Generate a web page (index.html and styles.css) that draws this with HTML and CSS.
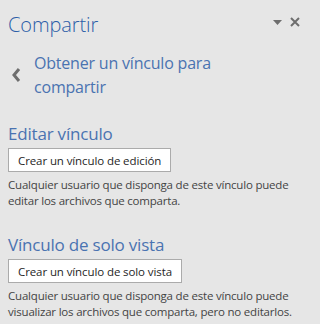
FILE: index.html
```html
<!DOCTYPE html>
<html lang="es">
<head>
<meta charset="utf-8">
<link rel="stylesheet" href="styles.css">
</head>
<body>
<div class="pane">
  <div class="header">
    <h1 class="title">Compartir</h1>
    <div class="tools">
      <svg class="ico-drop" width="9" height="5" viewBox="0 0 9 5"><path d="M0 0H9L4.5 5Z" fill="#6e6e6e"/></svg>
      <svg class="ico-close" width="10" height="10" viewBox="0 0 10 10"><path d="M1 1L9 9M9 1L1 9" stroke="#6e6e6e" stroke-width="2"/></svg>
    </div>
  </div>
  <div class="back">
    <svg class="ico-back" width="10" height="16" viewBox="0 0 10 16"><path d="M8 2L3 8L8 14" fill="none" stroke="#6e6e6e" stroke-width="3"/></svg>
    <div class="back-text">Obtener un vínculo para compartir</div>
  </div>
  <section class="sec">
    <h2 class="sec-title">Editar vínculo</h2>
    <button class="btn">Crear un vínculo de edición</button>
    <p class="desc">Cualquier usuario que disponga de este vínculo puede editar los archivos que comparta.</p>
  </section>
  <section class="sec sec2">
    <h2 class="sec-title">Vínculo de solo vista</h2>
    <button class="btn">Crear un vínculo de solo vista</button>
    <p class="desc">Cualquier usuario que disponga de este vínculo puede visualizar los archivos que comparta, pero no editarlos.</p>
  </section>
</div>
</body>
</html>
```
FILE: styles.css
```css
html, body {
  margin: 0;
  padding: 0;
  background: #e6e6e6;
}
body {
  font-family: "Open Sans", "Noto Sans", sans-serif;
  width: 309px;
  height: 324px;
  overflow: hidden;
}
.pane {
  padding: 0 8px;
}
.header {
  display: flex;
  justify-content: space-between;
  align-items: flex-start;
  padding-top: 11px;
}
.title {
  margin: 0;
  font-weight: 300;
  font-size: 20px;
  line-height: 28px;
  color: #2c5ea8;
  letter-spacing: -0.1px;
}
.tools {
  display: flex;
  align-items: center;
  gap: 8px;
  padding-top: 6px;
  padding-right: 1px;
}
.ico-drop { display: block; }
.ico-close { display: block; }
.back {
  display: flex;
  align-items: center;
  margin-top: 12px;
}
.ico-back {
  flex: none;
  margin-left: 3px;
  margin-right: 13px;
}
.back-text {
  font-size: 16px;
  font-weight: 400;
  line-height: 24px;
  color: #4a73b1;
  width: 230px;
  letter-spacing: -0.2px;
}
.sec {
  margin-top: 23px;
}
.sec2 {
  margin-top: 24px;
}
.sec-title {
  margin: 0;
  font-size: 17px;
  font-weight: 400;
  line-height: 24px;
  color: #4a73b1;
  letter-spacing: -0.2px;
}
.btn {
  display: block;
  margin-top: 2px;
  height: 24px;
  padding: 0 9px;
  background: #ffffff;
  border: 1px solid #ababab;
  font-family: inherit;
  font-size: 11.5px;
  color: #262626;
  letter-spacing: -0.1px;
}
.desc {
  margin: 5px 0 0;
  font-size: 11.5px;
  line-height: 16px;
  color: #444444;
  letter-spacing: -0.2px;
}
```
